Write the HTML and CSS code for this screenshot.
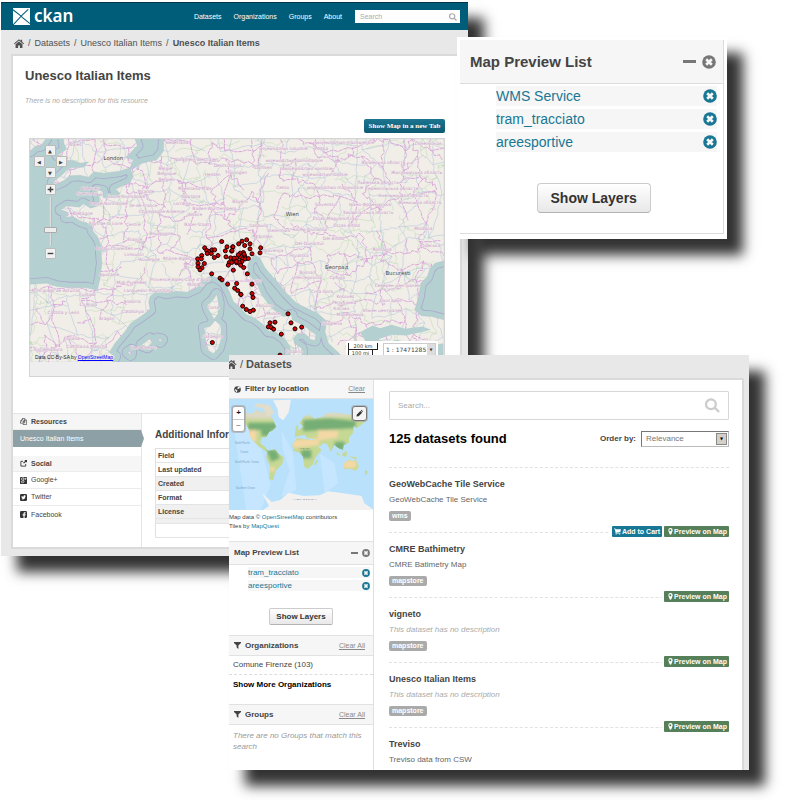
FILE: index.html
```html
<!DOCTYPE html>
<html lang="en">
<head>
<meta charset="utf-8">
<title>CKAN map preview</title>
<link rel="stylesheet" href="styles.css">
</head>
<body>
<svg class="sprite" aria-hidden="true">
  <symbol id="home" viewBox="0 0 16 14"><path d="M8 0 0 7l1 1.200L8 2.200l7 6L16 7l-3-2.700V.8h-2.200v1.600zM2.500 8.300V14h4v-4h3v4h4V8.300L8 3.700z"/></symbol>
  <symbol id="search" viewBox="0 0 16 16"><path fill="none" stroke="currentColor" stroke-width="2.400" d="M11.500 6.700a5.200 5.200 0 1 1-10.400 0 5.200 5.200 0 0 1 10.400 0zM10.500 10.500l4.500 4.500"/></symbol>
  <symbol id="remove" viewBox="0 0 16 16"><circle cx="8" cy="8" r="7.800"/><path stroke="#f6f6f6" stroke-width="3" d="m4.800 4.800 6.400 6.400m0-6.400-6.400 6.400"/></symbol>
  <symbol id="filter" viewBox="0 0 12 12"><path d="M0 0h12v1.500L7.500 6v6l-3-2.500V6L0 1.500z"/></symbol>
  <symbol id="globe" viewBox="0 0 16 16"><circle cx="8" cy="8" r="7.500"/><path fill="#fff" d="m8 2 4-.5 2 3-3 1-2 2-2-2 2-1zM3 6l3 3 2 1-2 4-3-3z"/></symbol>
  <symbol id="marker" viewBox="0 0 10 16"><path d="M5 0a5 5 0 0 0-5 5c0 2 1 3 3.200 9.500a2 2 0 0 0 3.600 0C9 8 10 7 10 5a5 5 0 0 0-5-5zm0 7.200A2.300 2.300 0 1 1 5 2.700a2.300 2.300 0 0 1 0 4.500z"/></symbol>
  <symbol id="cart" viewBox="0 0 16 14"><path d="M0 0h3l.6 2H16l-1.500 6L5 9v1h10v1.500H3.500V9L2 1.600H0z"/><circle cx="5" cy="12.700" r="1.300"/><circle cx="13" cy="12.700" r="1.300"/></symbol>
  <symbol id="copy" viewBox="0 0 16 16"><path fill="none" stroke="currentColor" stroke-width="1.400" d="M6 4.500V1h5v10H7M4 4l-3 3.500V12h5m1 3V8l3-3.500h5V15zM1 7h3V4m3 4h3V5M4 4l2-3"/></symbol>
  <symbol id="share" viewBox="0 0 16 16"><path fill="none" stroke="currentColor" stroke-width="2" d="M13 9v5H2V3h5"/><path d="M10 0h6v6l-2-2-5 4-2-2 5-4z"/></symbol>
  <symbol id="gplus" viewBox="0 0 16 16"><rect width="16" height="16" rx="2"/><path fill="none" stroke="#fff" stroke-width="1.500" d="M9 2H6C2 2 2 7 6 7c3 0 3-4 1-5m0 5 2 2c2 4-6 6-6 2 0-2 3-2 5-2m4-7v5m-2-3h5"/></symbol>
  <symbol id="twitter" viewBox="0 0 16 16"><rect width="16" height="16" rx="3"/><path fill="#fff" d="M3 4c2 2 3 2 5 2 0-3 3-4 4-2l2 0-2 2c0 6-6 8-9 5 2 0 3 0 3-1-2 0-2-1-2-2z"/></symbol>
  <symbol id="facebook" viewBox="0 0 16 16"><rect width="16" height="16" rx="3"/><path fill="#fff" d="M8 16v-6H6V7.500h2V6c0-3 2-3.500 5-3v2.200c-2 0-2.500 0-2.500 2.300H13L12.500 10h-2v6z"/></symbol>
  <symbol id="pencil" viewBox="0 0 16 16"><path d="m1 15 1-5 8-8 4 4-8 8zM11 1c1-1 2-1 3 0l1 1c1 1 1 2 0 3z"/></symbol>
</svg>

<main class="desktop">
  <section class="window resource">
    <header class="topbar">
      <a class="logo" href="#">
        <svg viewBox="0 0 48 48"><path fill="#fff" d="M0 0h48v48H0z"/><path fill="none" stroke="#005d7a" stroke-width="3" d="m0 5 23 18L43 4M0 48l23-25 4 4 21 17"/></svg>
        <span>ckan</span>
      </a>
      <nav>
        <a href="#">Datasets</a><a href="#">Organizations</a><a href="#">Groups</a><a href="#">About</a>
      </nav>
      <label class="top-search"><input type="search" placeholder="Search" aria-label="Search site"><svg><use href="#search"/></svg></label>
    </header>
    <nav class="crumbs">
      <a href="#" aria-label="Home"><svg><use href="#home"/></svg></a><span>/</span><a href="#">Datasets</a><span>/</span><a href="#">Unesco Italian Items</a><span>/</span><b>Unesco Italian Items</b>
    </nav>
    <div class="sheet">
      <div class="view">
        <h1>Unesco Italian Items</h1>
        <p class="empty">There is no description for this resource</p>
        <button class="new-tab" type="button">Show Map in a new Tab</button>
        <div class="map-frame">
          <div class="map">
            <svg class="europe" viewBox="30 27 1242 670" preserveAspectRatio="xMidYMid slice">
              <defs>
                <path id="land" d="M30 27H78L62 48 45 50 30 64ZM130 27H345L352 48 328 72 318 84 340 90 330 114 298 124 250 130 222 126 205 142 180 136 150 138 132 152 106 164 98 158 130 132 148 114 190 112 206 96 182 100 160 92 136 92 134 80 112 76 140 58 132 42ZM432 27H1272V393L1245 400 1230 415 1222 440 1202 460 1196 502 1184 540 1204 558 1235 560 1272 570V697H980L955 668 925 640 915 605 920 575 895 552 870 540 830 520 800 490 775 460 750 432 735 414 720 385 705 375 690 392 683 405 686 435 710 460 725 495 755 535 790 560 815 556 817 570 855 590 888 615 885 632 870 628 855 612 832 612 820 625 823 640 845 655 845 680 836 697H800L812 672 810 650 792 625 765 606 745 604 730 585 705 565 680 555 655 528 640 515 628 485 615 460 596 446 575 438 548 450 530 474 500 487 470 484 440 490 410 482 390 500 386 516 390 540 362 560 332 580 315 605 285 640 268 668 285 680 275 697H30V463L80 460 110 470 150 474 200 474 232 482 240 445 246 400 243 366 258 362 242 344 235 325 218 302 215 285 182 274 160 260 138 262 145 248 122 240 142 228 178 232 190 222 212 235 240 226 236 200 230 180 248 184 250 204 290 202 300 190 285 178 330 158 340 140 332 120 365 100 410 90 430 65ZM590 493 596 520 594 552 582 568 566 540 562 526 580 510ZM585 572 603 588 604 625 596 654 580 672 560 658 556 624 552 594 570 590ZM365 645 390 626 396 638 382 652ZM412 626 426 629 421 636ZM323 668 334 660 332 675Z"/>
                <clipPath id="land-clip"><use href="#land"/></clipPath>
              </defs>
              <path class="sea" d="M30 27h1242v670H30z"/>
              <use href="#land" class="waters-line"/><use href="#land" class="waters"/><use href="#land" class="land"/>
              <g clip-path="url(#land-clip)" id="network"></g>
              <path class="sea" d="m1020 607 38-20 22 8 35-10 40 12 53-7 25 10-30 7-45 10-43-2-40 13 20 12-50 8zM1060 650l70-20 90 20 50-10v57h-190z"/>
              <g id="labels"></g><g id="sites"></g>
            </svg>
            <div class="controls">
              <div class="pan">
                <button class="up" aria-label="Pan up">▲</button><button class="west" aria-label="Pan left">◀</button><button class="east" aria-label="Pan right">▶</button><button class="down" aria-label="Pan down">▼</button>
              </div>
              <button aria-label="Zoom in"><svg viewBox="0 0 10 10"><path d="M4 1h2v3h3v2H6v3H4V6H1V4h3z"/></svg></button>
              <input type="range" min="0" max="16" value="5" aria-label="Zoom level">
              <button aria-label="Zoom out"><svg viewBox="0 0 10 10"><path d="M1 4h8v2H1z"/></svg></button>
            </div>
            <p class="credit">Data CC-By-SA by <a href="#">OpenStreetMap</a></p>
            <div class="scale">
              <div class="ruler"><span>200 km</span><span>100 mi</span></div>
              <label class="ratio"><select aria-label="Map scale"><option>1 : 17471285</option></select></label>
            </div>
          </div>
        </div>
      </div>
      <div class="details">
        <aside>
          <h2><svg><use href="#copy"/></svg>Resources</h2>
          <a class="current" href="#">Unesco Italian Items</a>
          <h2><svg><use href="#share"/></svg>Social</h2>
          <a href="#"><svg><use href="#gplus"/></svg>Google+</a>
          <a href="#"><svg><use href="#twitter"/></svg>Twitter</a>
          <a href="#"><svg><use href="#facebook"/></svg>Facebook</a>
        </aside>
        <div class="info">
          <h2>Additional Information</h2>
          <table>
            <tr><th>Field</th></tr><tr><th>Last updated</th></tr><tr><th>Created</th></tr><tr><th>Format</th></tr><tr><th>License</th></tr>
            <tr class="thin"><td></td></tr><tr><td></td></tr>
          </table>
        </div>
      </div>
    </div>
  </section>

  <section class="window catalog">
    <nav class="crumbs"><a href="#" aria-label="Home"><svg viewBox="5 0 11 14"><path d="M8 0 0 7l1 1.200L8 2.200l7 6L16 7l-3-2.700V.8h-2.200v1.600zM2.500 8.300V14h4v-4h3v4h4V8.300L8 3.700z"/></svg></a><span>/</span><b>Datasets</b></nav>
    <div class="sheet">
      <aside>
        <h2><svg><use href="#globe"/></svg>Filter by location<a href="#">Clear</a></h2>
        <div class="world">
          <svg viewBox="28 147 432 333" preserveAspectRatio="none">
            <defs>
              <filter id="soft"><feGaussianBlur stdDeviation="5"/></filter>
              <clipPath id="world-clip"><path id="continents" d="M72 205 80 190 98 192 110 180 128 188 140 180 158 205 170 230 158 242 148 246 140 262 128 262 122 272 124 282 136 290 145 302 166 298 178 312 192 322 188 342 168 362 160 390 148 388 152 350 140 325 142 305 118 290 104 276 92 260 88 240 78 222ZM218 285 232 264 262 268 285 272 294 288 306 300 288 322 278 345 264 357 254 350 250 320 240 308 222 303ZM225 260 227 243 240 238 250 230 240 218 252 200 268 194 285 206 310 200 320 190 345 188 400 195 442 210 428 222 412 235 402 228 400 250 388 262 388 278 372 286 370 300 360 296 350 290 344 284 334 306 322 282 310 280 302 288 287 290 280 266 262 264 254 254 240 258ZM372 342 388 328 398 334 408 328 418 350 408 362 390 356 374 358ZM352 306 365 320 350 312ZM368 310 382 304 380 320 368 318ZM384 318 412 322 410 328ZM290 330 296 332 286 348 284 342ZM230 228 236 226 234 240 226 242ZM436 360 446 365 436 377Z"/></clipPath>
            </defs>
            <path fill="#b9e1fc" d="M28 147h432v333H28z"/>
            <path fill="#cdeaff" d="m28 175 60 20 40 110 25 100-30 75H80L45 250zM185 240l35 70 10 110-45 20 25-80-20-60zM300 310l45 30 10 60-40 30z" opacity=".6"/>
            <g clip-path="url(#world-clip)">
              <path fill="#c5d894" d="M28 147h432v333H28z"/>
              <g filter="url(#soft)"><path fill="#ddd9c5" d="M70 175h100v31H70zM240 175h210v25H240z"/><path fill="#76ae76" d="M85 218h85v22H85zM125 240h30v18h-30zM140 300h30l10 25-25 10zM250 210l80-5 80 9-5 20-155 10zM245 300h30v25h-30zM345 275h30v25h-30z"/><path fill="#f4d8a5" d="m215 270 80-5 5 20-80 10zM85 240h25v35H85zM295 240l60 2v20l-60 10zM370 330h40v25h-40zM150 350h15v15h-15z"/></g>
            </g>
            <path fill="#e0decb" d="m112 160 38 5 15 25-20 10-15-25-28-5z"/>
            <path fill="#f2f1ef" d="m160 151 54-2-7 38-16 24-14-10-3-23zM130 480l18-12-20-38 28 26 26-6 25-22 45 10 48-2 26-12 55 7 45 7 8 22 26 18v2z"/>
            <g fill="#78a3c9" font-family="Liberation Sans" font-size="8"><text x="46" y="283">North Pacific</text><text x="62" y="310">Ocean</text><text x="45" y="340">South Pacific Ocean</text><text x="48" y="418">Southern Ocean</text></g>
            <g fill="#555" font-family="Liberation Sans" font-size="7"><text x="222" y="451">• A N T A R C T I C A •</text><text x="237" y="297">A F R I C A</text></g>
          </svg>
          <div class="zoomer"><button aria-label="Zoom in">+</button><button aria-label="Zoom out">−</button></div>
          <button class="draw" aria-label="Draw area"><svg><use href="#pencil"/></svg></button>
        </div>
        <p class="tiles">Map data © <a href="#">OpenStreetMap</a> contributors<br>Tiles by <a href="#">MapQuest</a></p>
        <div class="preview">
          <h2>Map Preview List<button class="minus" aria-label="Collapse"></button><button aria-label="Close"><svg><use href="#remove"/></svg></button></h2>
          <ul>
            <li><a href="#">tram_tracciato</a><button aria-label="Remove tram_tracciato"><svg><use href="#remove"/></svg></button></li>
            <li><a href="#">areesportive</a><button aria-label="Remove areesportive"><svg><use href="#remove"/></svg></button></li>
          </ul>
          <button class="btn" type="button">Show Layers</button>
        </div>
        <h2 class="facet"><svg><use href="#filter"/></svg>Organizations<a href="#">Clear All</a></h2>
        <a class="choice" href="#">Comune Firenze (103)</a>
        <a class="more" href="#">Show More Organizations</a>
        <h2 class="facet"><svg><use href="#filter"/></svg>Groups<a href="#">Clear All</a></h2>
        <p class="none">There are no Groups that match this search</p>
      </aside>
      <div class="results">
        <label class="find"><input type="search" placeholder="Search..." aria-label="Search datasets"><svg><use href="#search"/></svg></label>
        <div class="summary">
          <h1>125 datasets found</h1>
          <label for="order">Order by:</label>
          <span class="order"><select id="order"><option>Relevance</option></select></span>
        </div>
        <article><h3>GeoWebCache Tile Service</h3><p>GeoWebCache Tile Service</p><span class="tag">wms</span>
          <div class="actions"><button class="cart"><svg><use href="#cart"/></svg>Add to Cart</button><button><svg><use href="#marker"/></svg>Preview on Map</button></div></article>
        <article><h3>CMRE Bathimetry</h3><p>CMRE Batimetry Map</p><span class="tag">mapstore</span>
          <div class="actions"><button><svg><use href="#marker"/></svg>Preview on Map</button></div></article>
        <article><h3>vigneto</h3><p class="empty">This dataset has no description</p><span class="tag">mapstore</span>
          <div class="actions"><button><svg><use href="#marker"/></svg>Preview on Map</button></div></article>
        <article><h3>Unesco Italian Items</h3><p class="empty">This dataset has no description</p><span class="tag">mapstore</span>
          <div class="actions"><button><svg><use href="#marker"/></svg>Preview on Map</button></div></article>
        <article class="last"><h3>Treviso</h3><p>Treviso data from CSW</p></article>
      </div>
    </div>
  </section>

  <section class="window closeup">
    <div class="preview large">
      <h2>Map Preview List<button class="minus" aria-label="Collapse"></button><button aria-label="Close"><svg><use href="#remove"/></svg></button></h2>
      <ul>
        <li><a href="#">WMS Service</a><button aria-label="Remove WMS Service"><svg><use href="#remove"/></svg></button></li>
        <li><a href="#">tram_tracciato</a><button aria-label="Remove tram_tracciato"><svg><use href="#remove"/></svg></button></li>
        <li><a href="#">areesportive</a><button aria-label="Remove areesportive"><svg><use href="#remove"/></svg></button></li>
      </ul>
      <button class="btn" type="button">Show Layers</button>
    </div>
  </section>
</main>
<script src="map.js"></script>
</body>
</html>
```
FILE: styles.css
```css
* { box-sizing: border-box; }
body { margin: 0; background: #fff; color: #444; font: 8px/10px "Liberation Sans", Arial, sans-serif; }
h1, h2, h3, p, ul { margin: 0; padding: 0; list-style: none; }
a { color: inherit; text-decoration: none; }
button, input, select { margin: 0; padding: 0; border: 0; background: none; color: inherit; font: inherit; }
input::placeholder { color: #aaa; opacity: 1; }
svg { display: block; fill: currentColor; flex: none; }
.sprite { position: absolute; width: 0; height: 0; }
.desktop { position: relative; min-height: 100vh; overflow: hidden; }
.window { position: absolute; background: #e8e8e8; box-shadow: 16px 16px 12px #333; }
.resource { left: 1px; right: 332px; top: 2px; padding-bottom: 9px; }
.catalog { left: 229px; right: 51px; top: 355px; }
.closeup { left: 457px; right: 73px; top: 37px; padding: 3px 3px 5px; background: #fff; }

/* Top bar */
.topbar { display: flex; align-items: center; height: 28px; padding: 0 8px 0 12px; background: #005d7a; border-top: 1px solid #003647; color: #fff; }
.logo { display: flex; align-items: center; gap: 4px; font: 600 17px/24px "Noto Sans", sans-serif; }
.logo svg { width: 17px; height: 17px; }
.logo span { margin-top: -2px; }
.topbar nav { display: flex; gap: 12px; margin-left: auto; margin-right: 13px; font-size: 7px; }
.top-search { display: flex; align-items: center; width: 105px; height: 13px; padding: 0 3px 0 5px; background: #fff; color: #aaa; font-size: 7px; }
.top-search input { flex: 1; min-width: 0; outline: 0; }
.top-search svg { width: 8px; height: 8px; }
.crumbs { display: flex; align-items: center; gap: 4px; height: 26px; padding: 0 13px; font-size: 9px; color: #505050; }
.crumbs svg { width: 10px; height: 9px; }
.sheet { background: #fff; box-shadow: 0 0 0 2px #dadada; }

/* Resource page */
.resource .sheet { margin: 0 8px 0 12px; }
.view { display: flex; flex-direction: column; padding: 12px 15px 36px 12px; }
.view h1 { font-size: 13px; line-height: 16px; }
.empty { color: #aaa; font-style: italic; }
.view .empty { margin-top: 12px; font-size: 7px; }
.new-tab { align-self: flex-end; margin: 13px 0 5px; height: 14px; width: 81px; border-radius: 2px; background: linear-gradient(#1c7590, #0d5a72); color: #fff; font: bold 7px/12px "Liberation Serif", serif; }
.map-frame { margin-left: 4px; padding-bottom: 14px; border: 1px solid #d4d4d4; background: #eee; }
.map { position: relative; overflow: hidden; }
.europe { width: 100%; height: 223px; }
.sea { fill: #b5d0d0; }
.land { fill: #f1eee8; stroke: #a9bcc8; stroke-width: 1; }
.waters-line { fill: none; stroke: #aaa9ce; stroke-width: 36; stroke-linejoin: round; }
.waters { fill: none; stroke: #b5d0d0; stroke-width: 31; stroke-linejoin: round; }
#network { fill: none; stroke-linejoin: round; }
.border { stroke: #dba9db; stroke-width: 3; stroke-dasharray: 12 2; }
.road { stroke: #a9bedb; stroke-width: 2; opacity: .7; }
.wood { stroke: #b5d9ac; stroke-width: 2; opacity: .7; }
#labels { fill: #c99bcd; font: 13px "DejaVu Sans", sans-serif; text-anchor: middle; paint-order: stroke; stroke: #f1eee8; stroke-width: 2px; }
#labels .city { fill: #444; font-size: 16px; }
#sites { fill: #d80000; stroke: #160000; stroke-width: 3; }
.controls { position: absolute; left: 4px; top: 6px; display: flex; flex-direction: column; align-items: center; gap: 2px; width: 32px; }
.controls button { display: grid; place-items: center; width: 11px; height: 11px; border: 1px solid #bbb; border-radius: 1px; background: #f2f2f2; color: #444; font: 5px/8px "DejaVu Sans", sans-serif; }
.controls button svg { width: 7px; height: 7px; }
.pan { display: grid; grid-template: repeat(3, 11px) / repeat(3, 11px); margin-bottom: 4px; }
.pan .up { grid-area: 1 / 2; }
.pan .west { grid-area: 2 / 1; }
.pan .east { grid-area: 2 / 3; }
.pan .down { grid-area: 3 / 2; }
.controls input { appearance: none; writing-mode: vertical-lr; direction: rtl; width: 13px; height: 49px; background: linear-gradient(90deg, transparent 5px, #aaa 5px, #eee 6px, #aaa 8px, transparent 8px); }
.controls input::-webkit-slider-thumb { appearance: none; width: 13px; height: 6px; border: 1px solid #aaa; border-radius: 1px; background: #eee; }
.credit { position: absolute; left: 5px; bottom: 0; font-size: 5px; color: #222; }
.credit a { color: #00f; text-decoration: underline; }
.scale { position: absolute; right: 6px; bottom: 4px; display: flex; align-items: center; gap: 5px; padding: 2px; background: #fff; }
.ruler { width: 30px; color: #333; font: 5px/6px "DejaVu Sans", sans-serif; text-align: center; }
.ruler span { display: block; border: solid #222; border-width: 0 1px 1px; }
.ruler span + span { width: 25px; border-bottom: 0; }
.ratio { position: relative; width: 53px; border: 1px solid #ccc; }
.ratio select { width: 100%; height: 10px; padding-left: 2px; appearance: none; font: 6px "DejaVu Sans", sans-serif; }
.ratio::after, .order::after { content: "▼"; position: absolute; right: 0; top: 0; bottom: 0; display: grid; place-items: center; width: 8px; background: #ddd; color: #444; font: 4px "DejaVu Sans", sans-serif; pointer-events: none; }

.details { display: grid; grid-template-columns: 129px 1fr; min-height: 134px; border-top: 1px solid #e4e4e4; font-size: 7px; }
.details aside { border-right: 1px solid #e4e4e4; }
.details aside h2, .details aside a { display: flex; align-items: center; gap: 4px; height: 16px; padding: 0 7px; font-size: 7px; border-bottom: 1px solid #ececec; }
.details aside h2 { background: #f6f6f6; }
.details aside a { height: 17px; }
.details aside a:last-child { border: 0; }
.details aside svg { width: 7px; height: 7px; color: #333; }
.details aside a.current { width: 131px; margin-bottom: 9px; background: #8ca0a6; color: #fff; border: 0; clip-path: polygon(0 0, 128px 0, 131px 50%, 128px 100%, 0 100%); }
.info { padding: 16px 12px 0 13px; }
.info h2 { margin-bottom: 8px; font-size: 10px; }
.info table { width: 100%; border-collapse: collapse; border: 1px solid #e0e0e0; }
.info th, .info td { height: 14px; padding: 0 2px; text-align: left; border-bottom: 1px solid #e4e4e4; }
.info tr:nth-child(3), .info tr:nth-child(5), .info .thin { background: #f0f0f0; }
.info .thin td { height: 5px; }

/* Catalog page */
.catalog .crumbs { height: 25px; padding: 0; gap: 3px; padding-bottom: 7px; font-size: 11px; }
.catalog .crumbs svg { width: 8px; height: 9px; }
.catalog .sheet { display: grid; grid-template-columns: 145px 1fr; margin-right: 7px; box-shadow: 1px -1px 0 1px #dadada; }
.catalog aside { border-right: 1px solid #e0e0e0; }
.catalog aside h2 { display: flex; align-items: center; gap: 4px; height: 19px; padding: 0 8px 0 5px; background: #f6f6f6; border-bottom: 1px solid #e2e2e2; font-size: 8px; }
.catalog aside h2 > svg { width: 7px; height: 7px; }
.catalog aside h2 > a { margin-left: auto; color: #888; font-size: 7px; font-weight: normal; text-decoration: underline; }
.world { position: relative; height: 111px; }
.world > svg { width: 100%; height: 111px; }
.zoomer { position: absolute; left: 3px; top: 7px; width: 13px; border: 1px solid #aaa; border-radius: 3px; background: #fff; box-shadow: 0 0 0 1px #9998; }
.zoomer button { display: block; width: 100%; height: 12px; color: #111; font-weight: bold; }
.zoomer button + button { border-top: 1px solid #ccc; color: #999; }
.draw { position: absolute; right: 6px; top: 7px; display: grid; place-items: center; width: 15px; height: 15px; border: 1px solid #777; border-radius: 3px; background: #f4f4f4; color: #333; box-shadow: 0 0 0 1px #9998; }
.draw svg { width: 7px; height: 7px; }
.tiles { padding: 3px 0 10px; font-size: 6px; line-height: 9px; }
.tiles a, .preview li { color: #187794; }
.preview h2 { border-top: 1px solid #e2e2e2; }
.preview h2 button, .preview li button { display: block; }
.preview .minus { width: 7px; height: 2px; margin-left: auto; background: #777; }
.preview h2 svg { color: #777; }
.preview svg { width: 8px; height: 8px; }
.catalog .preview h2 { height: 24px; padding-right: 3px; }
.preview ul { display: grid; gap: 2px; padding: 2px 3px 0 19px; }
.preview li { display: flex; align-items: center; justify-content: space-between; height: 11px; background: #f6f6f6; }
.btn { display: block; height: 17px; margin: 17px auto 10px; padding: 0 6px; border: 1px solid #ccc; border-bottom-color: #b3b3b3; border-radius: 2px; background: linear-gradient(#fff, #e8e8e8); color: #333; font-weight: bold; }
.catalog aside .facet { height: 21px; border-top: 1px solid #e2e2e2; }
.choice, .more { display: flex; align-items: center; height: 19px; padding-left: 4px; }
.choice { border-bottom: 1px dashed #ddd; }
.more { margin-bottom: 10px; color: #000; font-weight: bold; }
.none { padding: 5px 4px 18px; color: #999; font-style: italic; line-height: 11px; }
.results { min-width: 0; padding: 11px 13px 0 15px; }
.find { display: flex; align-items: center; height: 29px; padding: 0 8px; border: 1px solid #d8d8d8; border-radius: 1px; color: #ccc; }
.find input { flex: 1; min-width: 0; outline: 0; }
.find svg { width: 15px; height: 15px; }
.summary { display: flex; align-items: center; gap: 5px; height: 48px; padding-bottom: 10px; border-bottom: 1px dashed #e2e2e2; }
.summary h1 { flex: 1; color: #000; font-size: 13px; }
.summary label { font-weight: bold; }
.order { position: relative; width: 88px; border: 1px solid #bbb; border-top-color: #777; border-left-color: #777; }
.order select { width: 100%; height: 14px; padding-left: 4px; appearance: none; color: #777; }
.order::after { right: 1px; top: 1px; bottom: 1px; width: 9px; border: 1px solid #888; background: #d4d0c8; color: #000; }
article { position: relative; height: 65px; padding-top: 11px; border-bottom: 1px dashed #e2e2e2; }
article h3 { font-size: 9px; line-height: 11px; }
article p { margin: 5px 0 6px; color: #666; }
article .empty { color: #aaa; }
.tag { display: table; padding: 0 3px; border-radius: 2px; background: #aaa; color: #fff; font-size: 7px; font-weight: bold; }
.actions { position: absolute; right: 0; bottom: -5px; display: flex; gap: 2px; padding-left: 2px; background: #fff; }
.actions button { display: flex; align-items: center; justify-content: center; gap: 1px; height: 11px; padding: 0 2px 0 4px; border-radius: 1px; background: #56805a; color: #fff; font-size: 7px; font-weight: bold; }
.actions .cart { padding-left: 2px; background: #187794; }
.actions svg { width: 5px; height: 7px; }
.actions .cart svg { width: 7px; }
article.last { height: 37px; border: 0; }
article.last p { margin-bottom: 0; }

/* Enlarged preview list */
.large { border: solid #ddd; border-width: 0 1px 1px 0; font-size: 14px; line-height: 20px; }
.large h2 { display: flex; align-items: center; gap: 6px; height: 44px; padding: 0 7px 0 10px; background: #f6f6f6; border: 0; border-bottom: 1px solid #ddd; font-size: 15px; }
.large svg { width: 14px; height: 14px; }
.large .minus { width: 13px; height: 3px; }
.large ul { gap: 3px; padding: 2px 6px 0 36px; }
.large li { height: 20px; }
.large .btn { height: 30px; margin: 31px auto 20px calc(50% - 55px); padding: 0 13px; border-radius: 4px; }
```
FILE: map.js
```js
const NS = "http://www.w3.org/2000/svg";
function add(parent, tag, attrs, text) {
  const el = document.createElementNS(NS, tag);
  for (const k in attrs) el.setAttribute(k, attrs[k]);
  if (text) el.textContent = text;
  document.getElementById(parent).append(el);
}

let seed = 11;
const rnd = () => (seed = (seed * 16807) % 2147483647) / 2147483647;

// Wiggly mesh of administrative borders, roads and woodland
function mesh(cls, step, keep, wiggle) {
  const nodes = [];
  for (let y = 0; y < 700 / step + 2; y++) {
    nodes.push([]);
    for (let x = 0; x < 1280 / step + 2; x++) nodes[y].push([(x + rnd() - 0.5) * step, (y + rnd() - 0.5) * step]);
  }
  let d = "";
  const link = (a, b) => {
    if (rnd() > keep) return;
    d += `M${a[0] | 0} ${a[1] | 0}`;
    for (let i = 1; i < 5; i++) d += `L${(a[0] + (b[0] - a[0]) * i / 5 + (rnd() - 0.5) * wiggle) | 0} ${(a[1] + (b[1] - a[1]) * i / 5 + (rnd() - 0.5) * wiggle) | 0}`;
    d += `L${b[0] | 0} ${b[1] | 0}`;
  };
  nodes.forEach((row, y) => row.forEach((n, x) => {
    if (row[x + 1]) link(n, row[x + 1]);
    if (nodes[y + 1]) link(n, nodes[y + 1][x]);
  }));
  add("network", "path", { class: cls, d });
}
mesh("wood", 44, 0.4, 14);
mesh("road", 50, 0.75, 8);
mesh("border", 52, 0.65, 15);

[["Wales",165,50],["Nederland",470,42],["Nordrhein-Westfalen",528,93],["Deutschland",622,112],["België",436,120],["Belgique",440,136],["Belgien",440,154],["Hessen",578,138],["Thüringen",648,132],["Rheinland-Pfalz",525,181],["Saarland",512,206],["Alderney",210,180],["Guernsey",200,196],["Haute-Normandie",318,206],["Picardie",378,190],["Basse-Normandie",266,226],["Île-de-France",370,233],["Lorraine",486,227],["Baden-Württemberg",583,240],["Bretagne",188,255],["Champagne-Ardenne",425,250],["Alsace",525,260],["Pays de la Loire",257,287],["Centre",340,290],["Basel-Stadt",530,288],["Bourgogne",423,315],["France",345,335],["Poitou-Charentes",282,360],["Limousin",342,378],["Auvergne",388,395],["Rhône-Alpes",470,391],["Aquitaine",267,439],["Midi-Pyrénées",335,462],["Provence-Alpes-Côte d'Azur",480,453],["Monaco",527,470],["Languedoc-Roussillon",382,487],["Principado de Asturias",108,486],["Euskadi",202,500],["La Rioja",205,529],["Andorra",336,521],["Castilla y León",130,553],["Catalunya",338,551],["Aragón",260,571],["España",155,631],["Castilla-La Mancha",200,654],["Extremadura",85,665],["Illes Balears",370,657],["Corse",580,538],["Sardegna",578,626],["województwo mazowieckie",975,42],["województwo lubuskie",790,60],["Polska",904,62],["województwo dolnośląskie",822,97],["województwo opolskie",865,121],["województwo śląskie",915,140],["województwo małopolskie",945,178],["Волинська область",1090,102],["Житомирська область",1190,133],["Львівська область",1074,162],["Тернопільська область",1115,182],["Хмельницька область",1150,203],["Вінницька область",1200,222],["Івано-Франківська",1050,230],["Закарпатська область",1044,252],["Česko",788,177],["Sachsen",728,118],["Bayern",660,220],["Slovensko",917,230],["Észak-Magyarország",945,270],["Észak-Alföld",980,293],["Közép-Dunántúl",870,304],["Dél-Dunántúl",868,346],["Dél-Alföld",940,330],["Steiermark",776,306],["Salzburg",716,292],["Kärnten",732,326],["Slovenija",760,366],["Hrvatska",837,383],["Bosna",858,432],["i Hercegovina",860,449],["Србија",952,447],["România",1086,364],["Moldova",1210,302],["Crna Gora",906,489],["Kosovës",976,506],["Република",972,524],["Косово",964,541],["Македонија",990,560],["България",1112,516],["Южен централен",1088,548],["Северен централен",1132,472],["Shqipëria",935,587],["Abruzzo",733,533],["Molise",760,557],["Toscana",700,457],["Calabria",822,670],["Одеська",1232,352],["Гомельская",1225,47]]
  .forEach(([t, x, y]) => add("labels", "text", { x, y }, t));
[["London",280,92],["Wien",817,258],["Београд",950,419],["București",1134,437]]
  .forEach(([t, x, y]) => add("labels", "text", { x, y, class: "city" }, t));

// Heritage sites
[[605,335],[554,354],[560,362],[568,365],[576,360],[584,360],[562,371],[574,371],[545,377],[594,377],[583,383],[533,387],[544,387],[534,400],[553,401],[534,411],[546,414],[540,420],[575,432],[600,445],[606,450],[623,463],[640,421],[621,351],[638,351],[616,363],[635,364],[618,381],[632,384],[628,398],[643,391],[650,399],[625,406],[650,461],[644,475],[653,482],[662,493],[577,638],
 [656,342],[666,334],[680,330],[674,347],[690,342],[690,357],[696,372],[722,354],[720,369],[639,351],[636,362],[661,370],[670,368],[674,378],[660,382],[668,388],[650,385],[642,385],[676,387],[685,386],[666,395],[658,398],[662,406],[671,413],[682,432],[635,398],[696,463],[696,491],[699,503],[663,494],[668,529],[679,539],[690,545],[700,541],[804,552],[750,579],[765,577],[745,591],[754,593],[761,598],[784,613],[813,579],[825,597],[845,592],[780,676],[672,373],[655,375],[649,395]]
  .forEach(([cx, cy]) => add("sites", "circle", { cx, cy, r: 6 }));
```
